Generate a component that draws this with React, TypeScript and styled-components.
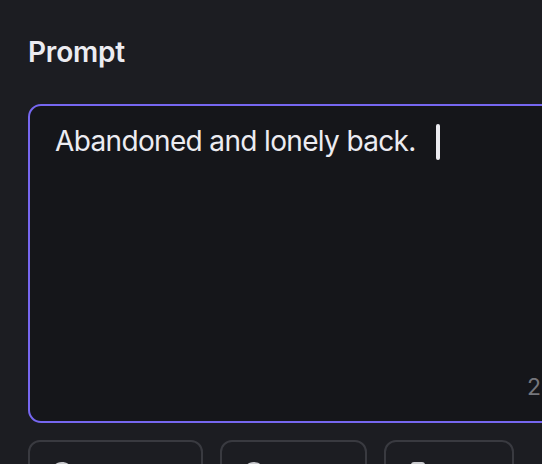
import * as React from "react";
import styled, { createGlobalStyle } from "styled-components";
import { Aperture, Palette, Ratio } from "lucide-react";

const GlobalStyle = createGlobalStyle`
  html, body {
    margin: 0;
    padding: 0;
    background: #1c1d22;
    overflow: hidden;
  }
  body {
    font-family: Inter, "Noto Sans", "Liberation Sans", sans-serif;
    -webkit-font-smoothing: antialiased;
  }
`;

const Page = styled.div`
  width: 640px;
  padding: 33px 0 0 28px;
  box-sizing: border-box;
  display: flex;
  flex-direction: column;
`;

const Label = styled.div`
  font-size: 28px;
  font-weight: 600;
  line-height: 38px;
  color: #ececf1;
  margin-bottom: 33px;
  letter-spacing: -0.2px;
`;

const PromptBox = styled.div`
  position: relative;
  height: 319px;
  border: 2px solid #7667f0;
  border-radius: 13px;
  background: #15161a;
  box-sizing: border-box;
  padding: 17px 25px;
`;

const PromptText = styled.div`
  font-size: 28px;
  line-height: 37px;
  letter-spacing: -0.65px;
  color: #ececf1;
  display: flex;
  align-items: center;
`;

const Caret = styled.span`
  display: inline-block;
  width: 4px;
  height: 36px;
  border-radius: 2px;
  background: #ececf1;
  margin-left: 20px;
`;

const Counter = styled.span`
  position: absolute;
  left: 497px;
  bottom: 20px;
  font-size: 23px;
  color: #75767c;
`;

const Options = styled.div`
  display: flex;
  gap: 17px;
  margin-top: 17px;
`;

const OptionButton = styled.button<{ $w: number }>`
  width: ${({ $w }) => $w}px;
  height: 66px;
  display: flex;
  align-items: center;
  gap: 10px;
  padding: 0 20px;
  box-sizing: border-box;
  background: transparent;
  border: 2px solid #393a40;
  border-radius: 12px;
  font-family: inherit;
  font-size: 24px;
  color: #c9cace;
`;

export default function App() {
  return (
    <>
      <GlobalStyle />
      <Page>
        <Label>Prompt</Label>
        <PromptBox>
          <PromptText>
            Abandoned and lonely back.
            <Caret />
          </PromptText>
          <Counter>26/1000</Counter>
        </PromptBox>
        <Options>
          <OptionButton $w={175}>
            <Aperture size={24} />
            Quality
          </OptionButton>
          <OptionButton $w={147}>
            <Palette size={24} />
            Style
          </OptionButton>
          <OptionButton $w={130}>
            <Ratio size={24} />
            1:1
          </OptionButton>
        </Options>
      </Page>
    </>
  );
}
